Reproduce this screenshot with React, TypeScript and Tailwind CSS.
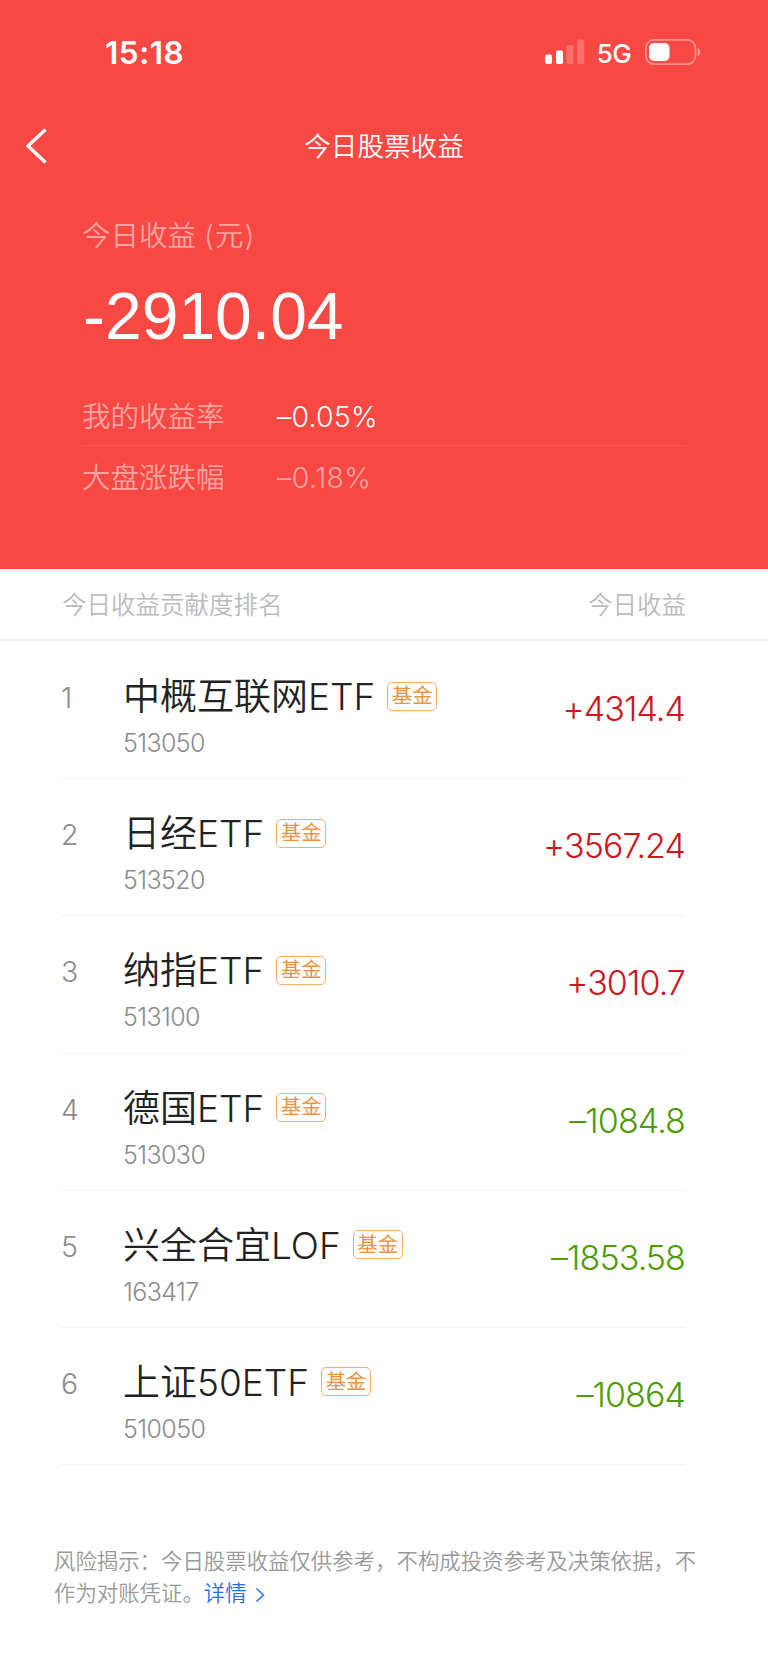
interface Holding {
  name: string;
  code: string;
  profit: string;
}

const holdings: Holding[] = [
  { name: "中概互联网ETF", code: "513050", profit: "+4314.4" },
  { name: "日经ETF", code: "513520", profit: "+3567.24" },
  { name: "纳指ETF", code: "513100", profit: "+3010.7" },
  { name: "德国ETF", code: "513030", profit: "–1084.8" },
  { name: "兴全合宜LOF", code: "163417", profit: "–1853.58" },
  { name: "上证50ETF", code: "510050", profit: "–10864" },
];

function StatusBar() {
  return (
    <div className="flex h-[104px] items-center justify-between pl-[105px] pr-[67px] text-white">
      <span className="pt-0.5 text-[31.500px] font-semibold leading-none tracking-[0.5px]">15:18</span>
      <div className="flex items-center">
        {/* Signal */}
        <svg width="40" height="26" viewBox="0 0 40 26" fill="currentColor">
          <rect x="0" y="15.5" width="7" height="9.5" rx="1.8" />
          <rect x="11" y="11.5" width="7" height="13.5" rx="1.8" />
          <rect x="21.5" y="6" width="7" height="19" rx="1.8" opacity="0.22" />
          <rect x="32.3" y="0.5" width="7" height="24.5" rx="1.8" opacity="0.22" />
        </svg>
        <span className="ml-3 mt-[3px] text-[26px] font-medium leading-none tracking-[-0.6px]">5G</span>
        {/* Battery */}
        <svg className="ml-3.5" width="56" height="26" viewBox="0 0 56 26" fill="none">
          <rect x="0.9" y="0.9" width="49.5" height="24.2" rx="8" stroke="white" strokeWidth="1.8" opacity="0.4" />
          <rect x="4" y="4" width="20.5" height="18" rx="5" fill="white" />
          <path d="M52.6 9v8.4c1.7-.6 2.8-2.3 2.8-4.2s-1.100-3.600-2.800-4.200z" fill="white" opacity="0.45" />
        </svg>
      </div>
    </div>
  );
}

function Summary() {
  return (
    <section className="h-[569px] bg-[#f74843]">
      <StatusBar />

      <nav className="grid h-[83px] grid-cols-[100px_1fr_100px] items-center text-white">
        <button className="pl-[24px]" aria-label="返回">
          <svg width="24" height="38" viewBox="0 0 24 38" fill="none" stroke="currentColor" strokeWidth="3.4">
            <path d="M21.500 2.500 4 19l17.500 16.500" />
          </svg>
        </button>
        <h1 className="pt-px text-center text-[26.600px] leading-none">今日股票收益</h1>
      </nav>

      <div className="pl-[82px] pr-[82px]">
        <p className="mt-[29px] text-[28.500px] leading-10 text-white/50">
          今日收益 <span className="tracking-[1px]">(元)</span>
        </p>
        <p className="mt-[20px] pl-px font-['Liberation_Sans'] text-[66px] font-normal leading-[80px] text-white">
          -2910.04
        </p>
        <div className="mt-[30px] flex h-[60px] items-center border-b border-white/10 pt-1 text-[28.500px]">
          <span className="w-[195px] text-white/50">我的收益率</span>
          <span className="tracking-[0.2px] text-white">–0.05%</span>
        </div>
        <div className="flex h-[62px] items-center pt-[3px] text-[28.500px] text-white/50">
          <span className="w-[195px]">大盘涨跌幅</span>
          <span className="tracking-[0.4px]">–0.18%</span>
        </div>
      </div>
    </section>
  );
}

function HoldingRow({ holding, rank }: { holding: Holding; rank: number }) {
  const isUp = holding.profit.startsWith("+");

  return (
    <li className="flex h-[137.200px] border-b border-[#f4f4f4] pt-[35px]">
      <span className="w-[62px] pt-px text-[28.500px] leading-10 text-[#8c8c8c]">{rank}</span>
      <div className="flex-1">
        <div className="flex items-center">
          <span className="text-[37px] leading-10 text-[#222]">{holding.name}</span>
          <span className="ml-3 mb-[2px] flex h-[29px] w-[50px] items-center justify-center rounded-[5px] border-[1.500px] border-[#f5ae6c] text-[20.500px] font-normal leading-none text-[#ee9140]">
            基金
          </span>
        </div>
        <p className="mt-3 text-[25px] leading-7 tracking-[-0.6px] text-[#8c8c8c]">{holding.code}</p>
      </div>
      <span className={`pt-3 text-[34px] leading-10 tracking-[-0.9px] ${isUp ? "text-[#d0141b]" : "text-[#4f9a08]"}`}>
        {holding.profit}
      </span>
    </li>
  );
}

export default function App() {
  return (
    <div className="min-h-[1666px] w-[768px] bg-white font-['Inter','Noto_Sans_CJK_SC',sans-serif] font-[350]">
      <Summary />

      <div className="flex h-[72px] items-center justify-between border-b-2 border-[#f0f0f0] pl-[62px] pr-[82px] pt-[3px] text-[24.500px] text-[#bbb]">
        <span>今日收益贡献度排名</span>
        <span>今日收益</span>
      </div>

      <ul className="pl-[61px] pr-[83px] pt-px">
        {holdings.map((holding, i) => (
          <HoldingRow key={holding.code} holding={holding} rank={i + 1} />
        ))}
      </ul>

      <div className="pl-[54px] pr-[60px] pt-[80px] text-[21.420px] leading-8 text-[#999]">
        <p>风险揭示：今日股票收益仅供参考，不构成投资参考及决策依据，不</p>
        <p className="flex items-center">
          作为对账凭证。
          <a href="#" className="flex items-center text-[#1f6ff5]">
            详情
            <svg className="ml-2 mt-1" width="10" height="16" viewBox="0 0 10 16" fill="none" stroke="currentColor" strokeWidth="1.5">
              <path d="M1.500 1.500 8.500 8l-7 6.500" />
            </svg>
          </a>
        </p>
      </div>
    </div>
  );
}
